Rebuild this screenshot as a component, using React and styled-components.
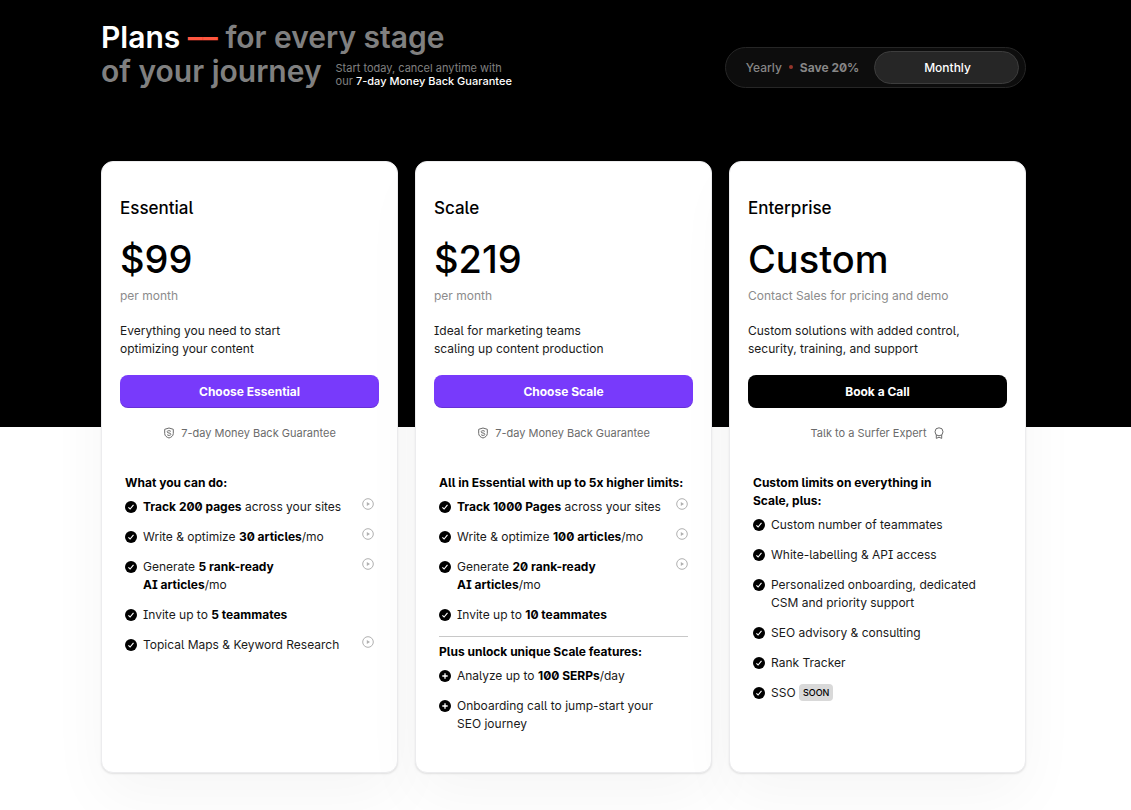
import React, { useState } from 'react'
import styled, { createGlobalStyle } from 'styled-components'

const GlobalStyle = createGlobalStyle`
  * { box-sizing: border-box; }
  body {
    margin: 0;
    background: #fff;
    color: #000;
    font-family: Inter, "Liberation Sans", sans-serif;
    font-size: 12px;
    line-height: 18px;
  }
  h1, h2, h3, p, ul { margin: 0; padding: 0; }
  button { font-family: inherit; cursor: pointer; }
`
const Page = styled.main`
  padding: 20px 105px 37px 101px;
  background: linear-gradient(#000 427px, #fff 427px);
`
const Header = styled.header`
  display: flex;
  justify-content: space-between;
  align-items: flex-end;
  margin-bottom: 73px;
`
const Title = styled.h1`
  font-size: 30px;
  line-height: 34px;
  font-weight: 600;
  color: #808080;
`
const TitleStrong = styled.span`
  color: #fff;
`
const TitleDash = styled.span`
  color: #ff5740;
`
const TitleRow = styled.span`
  display: flex;
  align-items: flex-end;
  gap: 14px;
`
const Note = styled.span`
  font-size: 11px;
  line-height: 13px;
  font-weight: 400;
  color: #808080;
  strong { color: #fff; font-weight: 500; }
`
const Toggle = styled.div`
  display: flex;
  align-items: center;
  height: 41px;
  padding: 0 6px 1px 3px;
  border: 1px solid #262626;
  border-radius: 21px;
  background: #0d0d0d;
`
const ToggleOption = styled.button`
  display: flex;
  align-items: center;
  justify-content: center;
  gap: 7px;
  width: 145px;
  height: 33px;
  padding: 0 0 0 2px;
  border: 1px solid ${p => (p.$active ? '#3d3d3d' : 'transparent')};
  border-radius: 17px;
  background: ${p => (p.$active ? '#262626' : 'transparent')};
  color: ${p => (p.$active ? '#fff' : '#868686')};
  font-size: 12px;
  font-weight: 500;
  font-feature-settings: "zero";
`
const Dot = styled.span`
  width: 4px;
  height: 4px;
  border-radius: 50%;
  background: #95352a;
`
const Cards = styled.div`
  display: grid;
  grid-template-columns: repeat(3, 1fr);
  gap: 17px;
`
const Card = styled.section`
  padding: 34px 18px 39px;
  border: 1px solid #ececee;
  border-radius: 12px;
  background: #fff;
  box-shadow: 0 1px 2px rgba(0, 0, 0, 0.1), 0 24px 60px rgba(0, 0, 0, 0.04);
  font-feature-settings: "ss02", "zero";
`
const PlanName = styled.h2`
  font-size: 17px;
  line-height: 24px;
  font-weight: 500;
`
const Price = styled.p`
  margin-top: 15px;
  font-size: 38px;
  line-height: 48px;
  font-weight: 500;
`
const Billing = styled.p`
  margin-top: 4px;
  color: #8c8c8c;
`
const Description = styled.p`
  margin-top: 17px;
  color: #1a1a1a;
  white-space: pre-line;
`
const PlanButton = styled.button`
  display: block;
  width: 100%;
  height: 33px;
  margin-top: 17px;
  border: none;
  border-radius: 8px;
  background: ${p => (p.$dark ? '#000' : '#783afb')};
  box-shadow: inset 0 -1px 0 rgba(0, 0, 0, 0.15);
  color: #fff;
  font-size: 12px;
  font-weight: 700;
`
const Hint = styled.p`
  display: flex;
  justify-content: center;
  align-items: center;
  gap: 6px;
  margin-top: 16px;
  color: #6b6b6b;
  font-size: 11px;
`
const Features = styled.div`
  margin: 32px 5px 0;
`
const GroupTitle = styled.h3`
  font-size: 12px;
  line-height: 18px;
  font-weight: 700;
  white-space: pre-line;
`
const Divider = styled.hr`
  height: 1px;
  margin: 12px 0 6px;
  border: none;
  background: #c8c8c8;
`
const List = styled.ul`
  display: grid;
  gap: 12px;
  margin-top: 6px;
  list-style: none;
`
const Item = styled.li`
  display: flex;
  align-items: flex-start;
  gap: 6px;
  color: #1a1a1a;
  white-space: pre-line;
  strong { color: #000; font-weight: 700; }
  > svg { flex: none; margin-top: 3px; }
`
const ItemText = styled.span`
  flex: 1;
`
const PlayButton = styled.button`
  display: flex;
  padding: 0;
  border: none;
  background: none;
  color: #b0b0b0;
`
const Badge = styled.span`
  display: inline-block;
  padding: 0 4px;
  border-radius: 4px;
  background: #d9d9d9;
  color: #000;
  font-size: 9px;
  line-height: 17px;
  font-weight: 500;
  vertical-align: top;
`

const CheckIcon = () => (
  <svg width="12" height="12" viewBox="0 0 12 12" aria-hidden="true">
    <circle cx="6" cy="6" r="6" fill="#000" />
    <path d="M3.4 6.3 5.1 8 8.5 3.8" fill="none" stroke="#fff" strokeWidth="1.1" />
  </svg>
)
const PlusIcon = () => (
  <svg width="12" height="12" viewBox="0 0 12 12" aria-hidden="true">
    <circle cx="6" cy="6" r="6" fill="#000" />
    <path d="M6 3.3v5.4M3.3 6h5.4" stroke="#fff" strokeWidth="1.3" />
  </svg>
)
const PlayIcon = () => (
  <svg width="12" height="12" viewBox="0 0 12 12" aria-hidden="true">
    <circle cx="6" cy="6" r="5.3" fill="none" stroke="currentColor" />
    <path d="M4.8 4v4L8 6z" fill="currentColor" />
  </svg>
)
const ShieldIcon = () => (
  <svg width="12" height="12" viewBox="0 0 12 12" fill="none" stroke="currentColor" aria-hidden="true">
    <path d="M6 1 10.3 2.3v4.2C10.3 8.900 8.300 10.300 6 11 3.700 10.300 1.700 8.900 1.700 6.500V2.300z" strokeLinejoin="round" />
    <path d="M7.900 4.500C7.500 3.900 6.800 3.700 6 3.700c-1.100 0-1.900.400-1.900 1.200C4.100 6.500 7.900 5.500 7.900 7.200c0 .800-.800 1.200-1.900 1.200-.800 0-1.500-.200-1.900-.800" />
  </svg>
)
const AwardIcon = () => (
  <svg width="12" height="12" viewBox="0 0 12 12" fill="none" stroke="currentColor" aria-hidden="true">
    <circle cx="6" cy="4.800" r="4" />
    <path d="M3.300 8v3.400L6 10.200l2.700 1.200V8" />
  </svg>
)

const plans = [
  {
    name: 'Essential',
    price: '$99',
    billing: 'per month',
    description: 'Everything you need to start\noptimizing your content',
    cta: 'Choose Essential',
    groups: [
      {
        title: 'What you can do:',
        items: [
          { text: <><strong>Track 200 pages</strong> across your sites</>, video: true },
          { text: <>Write & optimize <strong>30 articles</strong>/mo</>, video: true },
          { text: <>Generate <strong>5 rank-ready{'\n'}AI articles</strong>/mo</>, video: true },
          { text: <>Invite up to <strong>5 teammates</strong></> },
          { text: 'Topical Maps & Keyword Research', video: true },
        ],
      },
    ],
  },
  {
    name: 'Scale',
    price: '$219',
    billing: 'per month',
    description: 'Ideal for marketing teams\nscaling up content production',
    cta: 'Choose Scale',
    groups: [
      {
        title: 'All in Essential with up to 5x higher limits:',
        items: [
          { text: <><strong>Track 1000 Pages</strong> across your sites</>, video: true },
          { text: <>Write & optimize <strong>100 articles</strong>/mo</>, video: true },
          { text: <>Generate <strong>20 rank-ready{'\n'}AI articles</strong>/mo</>, video: true },
          { text: <>Invite up to <strong>10 teammates</strong></> },
        ],
      },
      {
        title: 'Plus unlock unique Scale features:',
        plus: true,
        items: [
          { text: <>Analyze up to <strong>100 SERPs</strong>/day</> },
          { text: 'Onboarding call to jump-start your\nSEO journey' },
        ],
      },
    ],
  },
  {
    name: 'Enterprise',
    price: 'Custom',
    billing: 'Contact Sales for pricing and demo',
    description: 'Custom solutions with added control,\nsecurity, training, and support',
    cta: 'Book a Call',
    dark: true,
    groups: [
      {
        title: 'Custom limits on everything in\nScale, plus:',
        items: [
          { text: 'Custom number of teammates' },
          { text: 'White-labelling & API access' },
          { text: 'Personalized onboarding, dedicated\nCSM and priority support' },
          { text: 'SEO advisory & consulting' },
          { text: 'Rank Tracker' },
          { text: <>SSO <Badge>SOON</Badge></> },
        ],
      },
    ],
  },
]

const PlanCard = ({ plan }) => (
  <Card>
    <PlanName>{plan.name}</PlanName>
    <Price>{plan.price}</Price>
    <Billing>{plan.billing}</Billing>
    <Description>{plan.description}</Description>
    <PlanButton type="button" $dark={plan.dark}>{plan.cta}</PlanButton>
    {plan.dark
      ? <Hint>Talk to a Surfer Expert <AwardIcon /></Hint>
      : <Hint><ShieldIcon /> 7-day Money Back Guarantee</Hint>}
    <Features>
      {plan.groups.map((group, g) => (
        <React.Fragment key={group.title}>
          {g > 0 && <Divider />}
          <GroupTitle>{group.title}</GroupTitle>
          <List>
            {group.items.map((item, i) => (
              <Item key={i}>
                {group.plus ? <PlusIcon /> : <CheckIcon />}
                <ItemText>{item.text}</ItemText>
                {item.video && (
                  <PlayButton type="button" aria-label="Play video"><PlayIcon /></PlayButton>
                )}
              </Item>
            ))}
          </List>
        </React.Fragment>
      ))}
    </Features>
  </Card>
)

export default function App() {
  const [period, setPeriod] = useState('monthly')
  return (
    <Page>
      <GlobalStyle />
      <Header>
        <Title>
          <TitleStrong>Plans</TitleStrong> <TitleDash>––</TitleDash> for every stage
          <TitleRow>
            of your journey
            <Note>
              Start today, cancel anytime with<br />
              our <strong>7-day Money Back Guarantee</strong>
            </Note>
          </TitleRow>
        </Title>
        <Toggle>
          <ToggleOption type="button" $active={period === 'yearly'} onClick={() => setPeriod('yearly')}>
            Yearly <Dot /> <strong>Save 20%</strong>
          </ToggleOption>
          <ToggleOption type="button" $active={period === 'monthly'} onClick={() => setPeriod('monthly')}>
            Monthly
          </ToggleOption>
        </Toggle>
      </Header>
      <Cards>
        {plans.map(plan => <PlanCard key={plan.name} plan={plan} />)}
      </Cards>
    </Page>
  )
}
